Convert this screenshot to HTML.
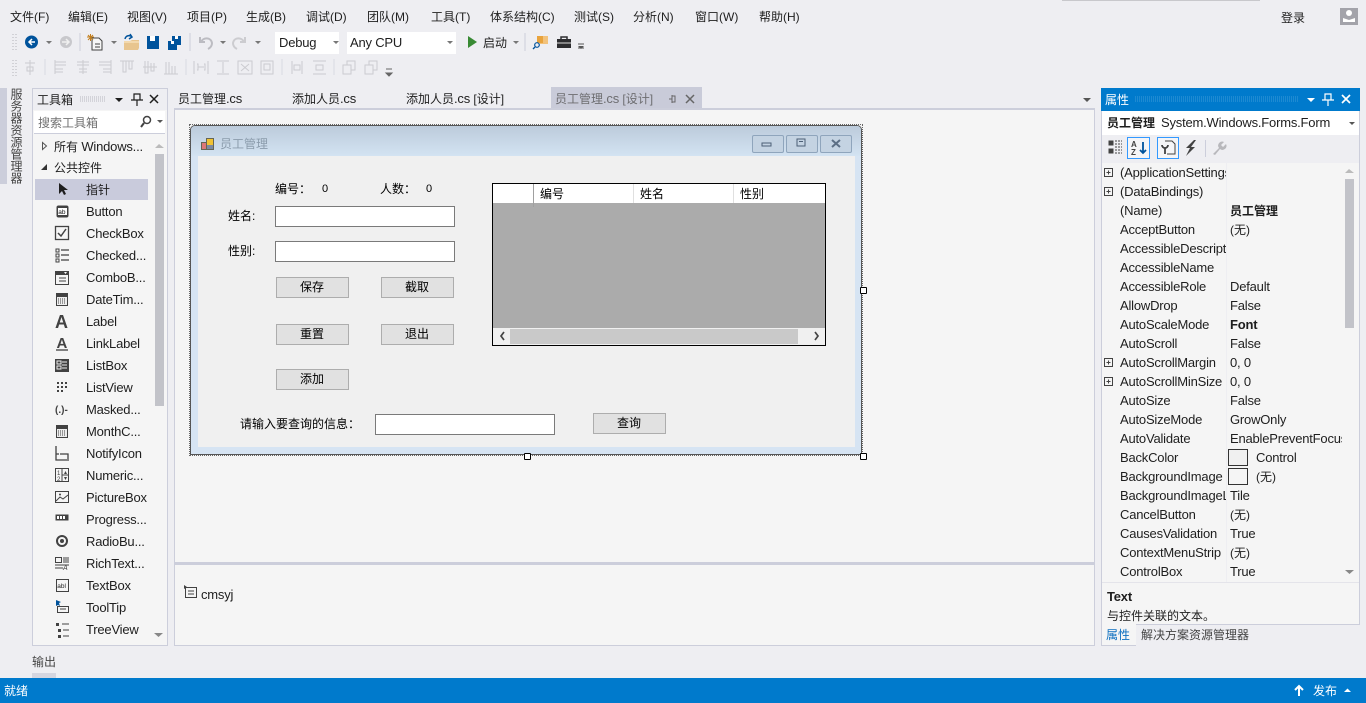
<!DOCTYPE html>
<html lang="zh"><head><meta charset="utf-8"><title>员工管理</title>
<style>
html,body{margin:0;padding:0}
body{width:1366px;height:703px;overflow:hidden;position:relative;background:#eeeef2;font:12px/16px "Liberation Sans","Noto Sans CJK SC",sans-serif;color:#1e1e1e}
.b{position:absolute}
.t{position:absolute;white-space:nowrap;line-height:16px;margin-top:1px}
.l{font-size:13px;letter-spacing:-.2px}
.g{position:absolute;left:0;top:0}
.inp{position:absolute;width:178px;height:19px;background:#fff;border:1px solid #7a7a7a}
.btn{position:absolute;width:71px;height:19px;background:#e1e1e1;border:1px solid #adadad;text-align:center;line-height:19px;color:#000;text-indent:-1px}
.wb{position:absolute;top:135px;height:16px;width:30px;border:1px solid #8fa5bc;background:#c4d3e2;border-radius:2px}
.h{position:absolute;width:5px;height:5px;background:#fff;border:1px solid #000;border-radius:1px}
.k{color:#000}
.p .t{color:#1e1e1e}
</style></head><body>

<!-- menu -->
<div class="b" style="left:1062px;top:0;width:198px;height:1px;background:#c8c8cc"></div>
<div class="t" style="left:10px;top:8px">文件(F)</div>
<div class="t" style="left:68px;top:8px">编辑(E)</div>
<div class="t" style="left:127px;top:8px">视图(V)</div>
<div class="t" style="left:187px;top:8px">项目(P)</div>
<div class="t" style="left:246px;top:8px">生成(B)</div>
<div class="t" style="left:306px;top:8px">调试(D)</div>
<div class="t" style="left:367px;top:8px">团队(M)</div>
<div class="t" style="left:431px;top:8px">工具(T)</div>
<div class="t" style="left:490px;top:8px">体系结构(C)</div>
<div class="t" style="left:574px;top:8px">测试(S)</div>
<div class="t" style="left:633px;top:8px">分析(N)</div>
<div class="t" style="left:695px;top:8px">窗口(W)</div>
<div class="t" style="left:759px;top:8px">帮助(H)</div>
<div class="t" style="left:1281px;top:9px">登录</div>
<div class="b" style="left:1340px;top:8px;width:18px;height:17px;background:#a3a3aa"></div>

<!-- toolbar combos -->
<div class="b" style="left:275px;top:32px;width:64px;height:22px;background:#fff"></div>
<div class="t l" style="left:279px;top:34px">Debug</div>
<div class="b" style="left:347px;top:32px;width:109px;height:22px;background:#fff"></div>
<div class="t l" style="left:350px;top:34px">Any CPU</div>
<div class="t" style="left:483px;top:34px">启动</div>

<!-- left side -->
<div class="b" style="left:0;top:88px;width:7px;height:96px;background:#cccedb"></div>
<div class="b" style="left:9px;top:88px;width:14px;height:96px;writing-mode:vertical-rl;font-size:12px;line-height:14px;color:#444;white-space:nowrap">服务器资源管理器</div>

<!-- toolbox -->
<div class="b" style="left:32px;top:88px;width:134px;height:556px;background:#f5f5f5;border:1px solid #cccedb"></div>
<div class="b" style="left:33px;top:89px;width:134px;height:21px;background:#eeeef2"></div>
<div class="t" style="left:37px;top:91px">工具箱</div>
<div class="b" style="left:34px;top:111px;width:131px;height:22px;background:#fff;border-bottom:1px solid #cccedb"></div>
<div class="t" style="left:38px;top:114px;color:#717171">搜索工具箱</div>
<div class="b" style="left:155px;top:154px;width:9px;height:252px;background:#c2c3c9"></div>
<div class="b" style="left:35px;top:179px;width:113px;height:21px;background:#c9cbdc"></div>
<div class="t" style="left:54px;top:138px">所有 <span class="l">Windows...</span></div>
<div class="t" style="left:54px;top:159px">公共控件</div>
<div class="t" style="left:86px;top:181px">指针</div>
<div class="t l" style="left:86px;top:203px">Button</div>
<div class="t l" style="left:86px;top:225px">CheckBox</div>
<div class="t l" style="left:86px;top:247px">Checked...</div>
<div class="t l" style="left:86px;top:269px">ComboB...</div>
<div class="t l" style="left:86px;top:291px">DateTim...</div>
<div class="t l" style="left:86px;top:313px">Label</div>
<div class="t l" style="left:86px;top:335px">LinkLabel</div>
<div class="t l" style="left:86px;top:357px">ListBox</div>
<div class="t l" style="left:86px;top:379px">ListView</div>
<div class="t l" style="left:86px;top:401px">Masked...</div>
<div class="t l" style="left:86px;top:423px">MonthC...</div>
<div class="t l" style="left:86px;top:445px">NotifyIcon</div>
<div class="t l" style="left:86px;top:467px">Numeric...</div>
<div class="t l" style="left:86px;top:489px">PictureBox</div>
<div class="t l" style="left:86px;top:511px">Progress...</div>
<div class="t l" style="left:86px;top:533px">RadioBu...</div>
<div class="t l" style="left:86px;top:555px">RichText...</div>
<div class="t l" style="left:86px;top:577px">TextBox</div>
<div class="t l" style="left:86px;top:599px">ToolTip</div>
<div class="t l" style="left:86px;top:621px">TreeView</div>
<div class="t" style="left:32px;top:653px;color:#444">输出</div>
<div class="b" style="left:32px;top:673px;width:24px;height:5px;background:#d5d6e0"></div>

<!-- document tabs -->
<div class="t" style="left:178px;top:90px">员工管理<span class="l">.cs</span></div>
<div class="t" style="left:292px;top:90px">添加人员<span class="l">.cs</span></div>
<div class="t" style="left:406px;top:90px">添加人员<span class="l">.cs</span> [设计]</div>
<div class="b" style="left:551px;top:87px;width:151px;height:21px;background:#c9cbd9"></div>
<div class="t" style="left:555px;top:90px;color:#6d6d70">员工管理<span class="l">.cs</span> [设计]</div>

<!-- document -->
<div class="b" style="left:174px;top:108px;width:920px;height:537px;background:#f5f5f5;border-bottom:1px solid #cccedb;border-right:1px solid #cccedb"></div>
<div class="b" style="left:174px;top:108px;width:921px;height:2px;background:#cccedb"></div>
<div class="b" style="left:174px;top:110px;width:1px;height:536px;background:#cccedb"></div>
<div class="b" style="left:175px;top:562px;width:920px;height:3px;background:#cccedb"></div>
<div class="t l" style="left:201px;top:586px">cmsyj</div>

<!-- form -->
<div class="b" style="left:189px;top:124px;width:672px;height:330px;border:1px dotted #666"></div>
<div class="b" style="left:190px;top:125px;width:672px;height:330px;box-sizing:border-box;border:1px solid #555;border-radius:5px 5px 0 0;background:#d6e4f3"></div>
<div class="b" style="left:191px;top:126px;width:670px;height:30px;border-radius:4px 4px 0 0;background:linear-gradient(#bccbdb,#d3e3f2)"></div>
<div class="b" style="left:198px;top:156px;width:657px;height:291px;background:#f0f0f0"></div>
<div class="t" style="left:220px;top:135px;color:#8b9cac">员工管理</div>
<div class="wb" style="left:752px"></div><div class="wb" style="left:786px"></div><div class="wb" style="left:820px"></div>

<div class="t k" style="left:275px;top:180px">编号：</div>
<div class="t k" style="left:322px;top:180px;font-size:11px">0</div>
<div class="t k" style="left:380px;top:180px">人数：</div>
<div class="t k" style="left:426px;top:180px;font-size:11px">0</div>
<div class="t k" style="left:228px;top:207px">姓名:</div>
<div class="inp" style="left:275px;top:206px"></div>
<div class="t k" style="left:228px;top:242px">性别:</div>
<div class="inp" style="left:275px;top:241px"></div>
<div class="btn" style="left:276px;top:277px">保存</div>
<div class="btn" style="left:381px;top:277px">截取</div>
<div class="btn" style="left:276px;top:324px">重置</div>
<div class="btn" style="left:381px;top:324px">退出</div>
<div class="btn" style="left:276px;top:369px">添加</div>
<div class="t k" style="left:240px;top:415px">请输入要查询的信息：</div>
<div class="inp" style="left:375px;top:414px"></div>
<div class="btn" style="left:593px;top:413px">查询</div>

<!-- data grid -->
<div class="b" style="left:492px;top:183px;width:332px;height:161px;border:1px solid #000;background:#ababab"></div>
<div class="b" style="left:493px;top:184px;width:332px;height:19px;background:#fff"></div>
<div class="b" style="left:533px;top:184px;width:1px;height:23px;background:#a0a0a0"></div>
<div class="b" style="left:633px;top:184px;width:1px;height:19px;background:#e0e0e0"></div>
<div class="b" style="left:733px;top:184px;width:1px;height:19px;background:#e0e0e0"></div>
<div class="t k" style="left:540px;top:185px">编号</div>
<div class="t k" style="left:640px;top:185px">姓名</div>
<div class="t k" style="left:740px;top:185px">性别</div>
<div class="b" style="left:493px;top:328px;width:332px;height:17px;background:#f0f0f0"></div>
<div class="b" style="left:510px;top:329px;width:288px;height:15px;background:#c9c9c9"></div>

<div class="h" style="left:860px;top:287px"></div>
<div class="h" style="left:524px;top:453px"></div>
<div class="h" style="left:860px;top:453px"></div>

<!-- properties -->
<div class="b" style="left:1101px;top:88px;width:257px;height:535px;background:#f5f5f5;border:1px solid #cccedb"></div>
<div class="b" style="left:1101px;top:88px;width:259px;height:23px;background:#007acc"></div>
<div class="t" style="left:1105px;top:91px;color:#fff">属性</div>
<div class="b" style="left:1102px;top:111px;width:257px;height:24px;background:#fff"></div>
<div class="t" style="left:1107px;top:114px;font-weight:bold">员工管理</div>
<div class="t l" style="left:1161px;top:114px">System.Windows.Forms.Form</div>
<div class="b" style="left:1102px;top:135px;width:257px;height:28px;background:#eeeef2"></div>
<div class="b" style="left:1127px;top:137px;width:21px;height:20px;background:#f5f5f7;border:1px solid #3399ff"></div>
<div class="b" style="left:1157px;top:137px;width:20px;height:20px;background:#f5f5f7;border:1px solid #3399ff"></div>
<div class="b" style="left:1205px;top:140px;width:1px;height:17px;background:#cccedb"></div>
<div class="b" style="left:1345px;top:179px;width:9px;height:149px;background:#c2c3c9"></div>
<div class="b" style="left:1226px;top:163px;width:1px;height:419px;background:#eeeef2"></div>

<div class="p">
<div class="t l" style="left:1120px;top:164px;width:106px;overflow:hidden">(ApplicationSettings)</div>
<div class="t l" style="left:1120px;top:183px;width:106px;overflow:hidden">(DataBindings)</div>
<div class="t l" style="left:1120px;top:202px">(Name)</div><div class="t" style="left:1230px;top:202px;font-weight:bold">员工管理</div>
<div class="t l" style="left:1120px;top:221px">AcceptButton</div><div class="t" style="left:1230px;top:221px">(无)</div>
<div class="t l" style="left:1120px;top:240px;width:106px;overflow:hidden">AccessibleDescription</div>
<div class="t l" style="left:1120px;top:259px">AccessibleName</div>
<div class="t l" style="left:1120px;top:278px">AccessibleRole</div><div class="t l" style="left:1230px;top:278px">Default</div>
<div class="t l" style="left:1120px;top:297px">AllowDrop</div><div class="t l" style="left:1230px;top:297px">False</div>
<div class="t l" style="left:1120px;top:316px">AutoScaleMode</div><div class="t l" style="left:1230px;top:316px;font-weight:bold">Font</div>
<div class="t l" style="left:1120px;top:335px">AutoScroll</div><div class="t l" style="left:1230px;top:335px">False</div>
<div class="t l" style="left:1120px;top:354px;width:106px;overflow:hidden">AutoScrollMargin</div><div class="t l" style="left:1230px;top:354px">0, 0</div>
<div class="t l" style="left:1120px;top:373px;width:106px;overflow:hidden">AutoScrollMinSize</div><div class="t l" style="left:1230px;top:373px">0, 0</div>
<div class="t l" style="left:1120px;top:392px">AutoSize</div><div class="t l" style="left:1230px;top:392px">False</div>
<div class="t l" style="left:1120px;top:411px">AutoSizeMode</div><div class="t l" style="left:1230px;top:411px">GrowOnly</div>
<div class="t l" style="left:1120px;top:430px">AutoValidate</div><div class="t l" style="left:1230px;top:430px;width:112px;overflow:hidden">EnablePreventFocusChange</div>
<div class="t l" style="left:1120px;top:449px">BackColor</div><div class="t l" style="left:1256px;top:449px">Control</div>
<div class="t l" style="left:1120px;top:468px;width:106px;overflow:hidden">BackgroundImage</div><div class="t" style="left:1256px;top:468px">(无)</div>
<div class="t l" style="left:1120px;top:487px;width:106px;overflow:hidden">BackgroundImageLayout</div><div class="t l" style="left:1230px;top:487px">Tile</div>
<div class="t l" style="left:1120px;top:506px">CancelButton</div><div class="t" style="left:1230px;top:506px">(无)</div>
<div class="t l" style="left:1120px;top:525px">CausesValidation</div><div class="t l" style="left:1230px;top:525px">True</div>
<div class="t l" style="left:1120px;top:544px;width:106px;overflow:hidden">ContextMenuStrip</div><div class="t" style="left:1230px;top:544px">(无)</div>
<div class="t l" style="left:1120px;top:563px">ControlBox</div><div class="t l" style="left:1230px;top:563px">True</div>
</div>
<div class="b" style="left:1228px;top:449px;width:18px;height:15px;background:#f0f0f0;border:1px solid #333"></div>
<div class="b" style="left:1228px;top:468px;width:18px;height:15px;background:#f5f5f5;border:1px solid #333"></div>
<div class="b" style="left:1102px;top:582px;width:257px;height:1px;background:#e4e4ea"></div>
<div class="t l" style="left:1107px;top:588px;font-weight:bold">Text</div>
<div class="t" style="left:1107px;top:607px">与控件关联的文本。</div>
<div class="b" style="left:1101px;top:624px;width:34px;height:21px;background:#f5f5f5;border-bottom:1px solid #cccedb;border-left:1px solid #cccedb"></div>
<div class="t" style="left:1106px;top:626px;color:#0e70c0">属性</div>
<div class="t" style="left:1141px;top:626px;color:#444">解决方案资源管理器</div>

<!-- status -->
<div class="b" style="left:0;top:678px;width:1366px;height:25px;background:#007acc"></div>
<div class="t" style="left:4px;top:682px;color:#fff">就绪</div>
<div class="t" style="left:1313px;top:682px;color:#fff">发布</div>

<!-- icons overlay -->
<svg class="g" width="1366" height="703" viewBox="0 0 1366 703" fill="none" font-family="Liberation Sans">
<!-- avatar -->
<circle cx="1349" cy="13" r="3" fill="#fff"/><path d="M1343 22v-4l6 2 6-2v4z" fill="#fff"/>
<!-- grips -->
<path d="M13 34v16M16 34v16M13 60v16M16 60v16" stroke="#b4b4ba" stroke-dasharray="1 2"/>
<!-- toolbar 1 -->
<circle cx="31.500" cy="42" r="6.500" fill="#00539c"/><path d="M35 42h-5M32 39l-3 3 3 3" stroke="#fff" stroke-width="1.500"/>
<path d="M46 41h6l-3 3z M111 41h6l-3 3z M220 41h6l-3 3z M255 41h6l-3 3z M333 41h6l-3 3z M447 41h6l-3 3z M513 41h6l-3 3z" fill="#777"/>
<circle cx="66" cy="42" r="6" fill="#c8c8cc"/><path d="M62 42h6M66 39l3 3-3 3" stroke="#f0f0f0" stroke-width="1.500"/>
<path d="M80 33v18M190 33v18M525 33v18" stroke="#cccedb"/>
<path d="M92 38h7l3 3v9h-10z" fill="#f6f6f6" stroke="#424242"/><path d="M87 37h7M90.500 34v7M88 35l5 5M93 35l-5 5" stroke="#c27d1a"/><path d="M95 44h5M95 47h5" stroke="#424242"/>
<path d="M124 41h6l2-1h7v8l-1 2h-14z" fill="#e8c58f"/><path d="M124 41h15v2h-15z" fill="#f3d9ae"/><path d="M125 39c1-4 5-4 7-2M130 34l2 3-3 2" stroke="#00539c" stroke-width="1.500"/>
<path d="M147 36h12v13h-12z" fill="#00539c"/><path d="M150 36h5v5h-5z" fill="#fff"/>
<path d="M172 36h9v9h-9z" fill="#00539c"/><path d="M175 36h3v3h-3z" fill="#fff"/><path d="M168 41h9v9h-9z" fill="#00539c"/><path d="M171 41h3v3h-3z" fill="#fff"/>
<path d="M200 37v5h5M201 42c2-5 10-5 11 1 0 3-2 5-4 6" stroke="#bcbcc2" stroke-width="2"/>
<path d="M245 37v5h-5M244 42c-2-5-10-5-11 1 0 3 2 5 4 6" stroke="#ccccd0" stroke-width="2"/>
<path d="M468 36v12l9-6z" fill="#388a34"/>
<path d="M537 36h11v8h-8z" fill="#f2c27c"/><path d="M537 36h6v7h-6z" fill="#e8a33d"/><circle cx="537" cy="45" r="2.300" stroke="#00539c" stroke-width="1.200"/><path d="M535 47l-2 2" stroke="#00539c" stroke-width="1.300"/>
<path d="M557 39h14v9h-14z" fill="#2d2d30"/><path d="M561 39v-2h6v2" stroke="#2d2d30" stroke-width="1.500"/><path d="M557 43h14" stroke="#ddd"/>
<path d="M578 44h6M578 48h6" stroke="#555"/><path d="M578 46h6l-3 3z" fill="#555"/>
<!-- toolbar 2 -->
<g stroke="#cbcbd0" stroke-width="1" transform="translate(0 -1)">
<path d="M30 61v15M25 64h10M27 68h6v4h-6z"/>
<path d="M45 60v16M186 60v16M282 60v16M334 60v16" stroke="#d8d9e2"/>
<path d="M55 61v14M55 63h11M55 66h11M55 70h8M55 73h8"/>
<path d="M83 61v14M77 63h12M77 66h12M79 70h8M79 73h8"/>
<path d="M111 61v14M99 63h12M99 66h12M103 70h8M103 73h8"/>
<path d="M120 62h14M123 62v11h3V62M129 62v8h3v-8"/>
<path d="M143 68h14M145 62v12h3V62M151 64v8h3v-8"/>
<path d="M164 75h14M166 63v12h3V63M172 67v8h3v-8"/>
<path d="M194 62v13M208 62v13M198 68h6M197 65h1v6h-1M204 65h1v6h-1"/>
<path d="M217 62h12M217 75h12M223 63v11"/>
<path d="M238 62h14v13h-14zM241 65l8 7M249 65l-8 7"/>
<path d="M261 62h12v13h-12zM264 65h6v6h-6z"/>
<path d="M292 62v13M302 62v13M294 66h6v5h-6z"/>
<path d="M313 62h13M313 75h13M316 66h7v5h-7z"/>
<path d="M343 66h8v9h-8zM347 66v-4h8v9h-4"/>
<path d="M365 66h8v9h-8zM369 66v-4h8v9h-4"/>
</g>
<path d="M386 69h6M386 73h6l-3 3z" stroke="#666" fill="#666"/>
<!-- toolbox head -->
<path d="M80 97h26M80 99h26M80 101h26" stroke="#b8b8c0" stroke-dasharray="1 1"/>
<path d="M115 98h8l-4 4z" fill="#1e1e1e"/>
<path d="M134 94h6v6h-6zM131 100h12M137 100v6M134 94h6" stroke="#1e1e1e" stroke-width="1.200"/>
<path d="M150 95l8 8M158 95l-8 8" stroke="#1e1e1e" stroke-width="1.500"/>
<circle cx="147" cy="120" r="3.500" stroke="#424242" stroke-width="1.500"/><path d="M144 123l-3 4" stroke="#424242" stroke-width="2"/><path d="M157 120h6l-3 3z" fill="#555"/>
<path d="M42.500 142.500v7l4-3.500z" stroke="#555"/><path d="M47 164v6h-6z" fill="#333"/>
<path d="M155 148l4-4 5 4z" fill="#bbb"/><path d="M154 633h9l-4.500 4z" fill="#888"/>
<!-- toolbox icons -->
<path d="M59 183v11l3-3 2 4 2-1-2-4h4z" fill="#1e1e1e"/>
<rect x="56.500" y="205.500" width="12" height="12" rx="2" fill="#424242"/><rect x="58" y="208" width="9" height="7" fill="#fff"/><text x="58.300" y="214" font-size="6.500" fill="#111">ab</text>
<rect x="55.500" y="226.500" width="13" height="13" stroke="#424242" stroke-width="1.300"/><path d="M58 233l3 3 5-7" stroke="#424242" stroke-width="1.500"/>
<path d="M56 249h3v3h-3zM56 254h3v3h-3zM56 259h3v3h-3z" stroke="#424242"/><path d="M61 250h8M61 255h8M61 260h8" stroke="#424242" stroke-width="1.300"/>
<path d="M55.500 271.500h13v13h-13z" stroke="#424242"/><path d="M55 271h14v4H55z" fill="#424242"/><path d="M59 278h7M59 281h7" stroke="#424242"/><path d="M64 272h3l-1.500 2z" fill="#fff"/>
<g id="cal"><path d="M56 293h12v13H56z" fill="#424242"/><path d="M57 297h10v8H57z" fill="#eee"/><path d="M58 299h8M58 301h8M58 303h8" stroke="#424242" stroke-dasharray="1 1"/></g>
<text x="55" y="328" font-size="18" font-weight="bold" fill="#424242">A</text>
<text x="56.500" y="348" font-size="15" font-weight="bold" fill="#424242">A</text><path d="M56 350h12" stroke="#424242" stroke-width="1.300"/>
<path d="M55 359h14v13H55z" fill="#424242"/><path d="M57 361h4v3h-4zM57 366h4v3h-4zM62 362h5M62 365h5M62 368h5" stroke="#eee"/>
<path d="M57 382h2v2h-2zM61 382h2v2h-2zM65 382h2v2h-2zM57 386h2v2h-2zM61 386h2v2h-2zM65 386h2v2h-2zM57 390h2v2h-2zM61 390h2v2h-2z" fill="#424242"/>
<text x="55" y="413" font-size="10" font-weight="bold" fill="#424242">(.)-</text>
<use href="#cal" y="132"/>
<path d="M56 446v14h13M60 454h8v5M56 454h3" stroke="#424242" stroke-width="1.300"/>
<path d="M55.500 468.500h13v13h-13zM62 468v13M62 475h7" stroke="#424242"/><text x="57" y="475" font-size="6" fill="#424242">1</text><text x="57" y="481" font-size="6" fill="#424242">2</text><path d="M64 474h3l-1.500-3zM64 477h3l-1.500 3z" fill="#424242"/>
<path d="M55.500 491.500h13v11h-13z" stroke="#424242"/><path d="M56 501l4-4 3 2 5-4" stroke="#424242"/><circle cx="60" cy="494.500" r="1" fill="#424242"/>
<path d="M55.500 514.500h13v6h-13z" fill="#424242"/><path d="M57 516h2v3h-2zM60 516h2v3h-2zM63 516h2v3h-2z" fill="#fff"/>
<circle cx="62" cy="541" r="5" stroke="#424242" stroke-width="2"/><circle cx="62" cy="541" r="2" fill="#424242"/>
<path d="M55.500 557.500h6v5h-6z" stroke="#424242"/><path d="M63 558h6M63 560h6M63 562h6M55 565h14M55 568h8" stroke="#424242"/><text x="63" y="570" font-size="7" font-style="italic" fill="#424242">A</text>
<rect x="56.500" y="579.500" width="12" height="12" stroke="#424242"/><text x="57.300" y="588" font-size="6.500" fill="#222">abl</text>
<path d="M56 600v6l2-1 2 1-1-3 2-1z" fill="#00539c"/><path d="M57.500 606.500h11v6h-11zM60 609h6" stroke="#424242"/>
<path d="M56 623h3v3h-3zM58 629h3v3h-3zM58 635h3v3h-3z" fill="#424242"/><path d="M62 624h7M63 630h6M63 636h6" stroke="#424242"/>
<!-- tab icons -->
<path d="M669 96v3h6v-3zM668 99h8M672 99v3" stroke="#666" transform="rotate(90 672 99)"/>
<path d="M686 95l8 8M694 95l-8 8" stroke="#666" stroke-width="1.500"/>
<path d="M1083 98h8l-4 4z" fill="#555"/>
<!-- tray icon -->
<path d="M185.500 587.500h11v10h-11zM188 591h6M188 594h6" stroke="#424242"/><path d="M184 585l3 2-3 2z" fill="#424242"/>
<!-- form title icon -->
<path d="M201 142h6v7h-6z" fill="#d77"/><path d="M206 138h8v7h-8z" fill="#f1c232"/><path d="M206 145h8v5h-8z" fill="#7c8aa0"/><path d="M201.500 142.500h5v7h-5zM206.500 138.500h7v11h-7z" stroke="#665"/>
<!-- window buttons -->
<path d="M762 143h9v3h-9z" stroke="#4c5f75"/><path d="M797 139h8v7h-8z" stroke="#4c5f75"/><path d="M799 141h4v1h-4z" fill="#4c5f75"/>
<path d="M832 140l8 7M840 140l-8 7" stroke="#5c6f85" stroke-width="2"/>
<!-- grid scroll arrows -->
<path d="M504 332l-3 4 3 4M815 332l3 4-3 4" stroke="#444" stroke-width="1.700"/>
<!-- props head -->
<path d="M1135 97h163M1135 99h163M1135 101h163" stroke="#3d9ad8" stroke-dasharray="1 1"/>
<path d="M1307 98h8l-4 4z" fill="#fff"/>
<path d="M1325 94h6v6h-6zM1322 100h12M1328 100v6" stroke="#fff" stroke-width="1.200"/>
<path d="M1342 95l8 8M1350 95l-8 8" stroke="#fff" stroke-width="1.700"/>
<path d="M1349 122h6l-3 3z" fill="#555"/>
<!-- props tools -->
<path d="M1109 141h4v4h-4zM1109 149h4v4h-4z" stroke="#424242" fill="#424242"/><path d="M1115 141h7M1115 144h7M1115 147h7M1115 150h7M1115 153h7" stroke="#424242" stroke-dasharray="2 1"/>
<text x="1131" y="147" font-size="8" font-weight="bold" fill="#424242">A</text><text x="1131" y="155" font-size="8" font-weight="bold" fill="#424242">Z</text><path d="M1143 142v11M1140 150l3 3 3-3" stroke="#00539c" stroke-width="1.800"/>
<path d="M1165 141h7l3 3v10h-8" stroke="#424242"/><path d="M1162 145a3 3 0 0 0 3 3 3 3 0 0 0 3-3M1165 148v6" stroke="#424242" stroke-width="1.800"/>
<path d="M1194 140l-8 8h4l-4 8 9-9h-4l5-7z" fill="#424242"/>
<path d="M1213 154l6-6a4 4 0 0 1 5-6l-3 3 2 2 3-3a4 4 0 0 1-6 5l-5 6z" fill="#b8b8bc"/>
<!-- plus boxes -->
<g stroke="#424242"><path d="M1104.500 168.500h8v8h-8zM1106.500 172.500h4M1108.500 170.500v4"/><path d="M1104.500 187.500h8v8h-8zM1106.500 191.500h4M1108.500 189.500v4"/><path d="M1104.500 358.500h8v8h-8zM1106.500 362.500h4M1108.500 360.500v4"/><path d="M1104.500 377.500h8v8h-8zM1106.500 381.500h4M1108.500 379.500v4"/></g>
<path d="M1345 173l4-4 5 4z" fill="#bbb"/><path d="M1345 570h9l-4.500 4z" fill="#888"/>
<!-- status -->
<path d="M1299 696v-10M1295 690l4-4 4 4" stroke="#fff" stroke-width="2"/>
<path d="M1344 692h7l-3.500-3.500z" fill="#fff"/>
</svg>
</body></html>
